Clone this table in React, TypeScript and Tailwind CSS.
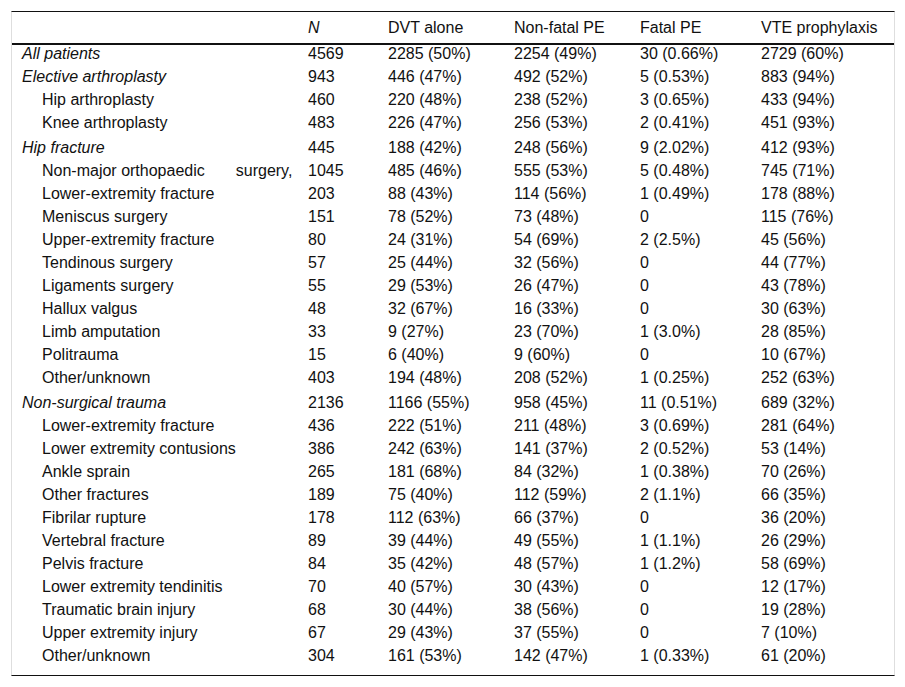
import React from "react";

type Row = {
  label: React.ReactNode;
  level: 0 | 1;
  section?: boolean;
  cells: [string, string, string, string, string];
};

const rows: Row[] = [
  { label: "All patients", level: 0, cells: ["4569", "2285 (50%)", "2254 (49%)", "30 (0.66%)", "2729 (60%)"] },
  { label: "Elective arthroplasty", level: 0, cells: ["943", "446 (47%)", "492 (52%)", "5 (0.53%)", "883 (94%)"] },
  { label: "Hip arthroplasty", level: 1, cells: ["460", "220 (48%)", "238 (52%)", "3 (0.65%)", "433 (94%)"] },
  { label: "Knee arthroplasty", level: 1, cells: ["483", "226 (47%)", "256 (53%)", "2 (0.41%)", "451 (93%)"] },
  { label: "Hip fracture", level: 0, section: true, cells: ["445", "188 (42%)", "248 (56%)", "9 (2.02%)", "412 (93%)"] },
  {
    label: (
      <>
        Non-major orthopaedic<span className="ml-[31px]">surgery,</span>
      </>
    ),
    level: 1,
    cells: ["1045", "485 (46%)", "555 (53%)", "5 (0.48%)", "745 (71%)"],
  },
  { label: "Lower-extremity fracture", level: 1, cells: ["203", "88 (43%)", "114 (56%)", "1 (0.49%)", "178 (88%)"] },
  { label: "Meniscus surgery", level: 1, cells: ["151", "78 (52%)", "73 (48%)", "0", "115 (76%)"] },
  { label: "Upper-extremity fracture", level: 1, cells: ["80", "24 (31%)", "54 (69%)", "2 (2.5%)", "45 (56%)"] },
  { label: "Tendinous surgery", level: 1, cells: ["57", "25 (44%)", "32 (56%)", "0", "44 (77%)"] },
  { label: "Ligaments surgery", level: 1, cells: ["55", "29 (53%)", "26 (47%)", "0", "43 (78%)"] },
  { label: "Hallux valgus", level: 1, cells: ["48", "32 (67%)", "16 (33%)", "0", "30 (63%)"] },
  { label: "Limb amputation", level: 1, cells: ["33", "9 (27%)", "23 (70%)", "1 (3.0%)", "28 (85%)"] },
  { label: "Politrauma", level: 1, cells: ["15", "6 (40%)", "9 (60%)", "0", "10 (67%)"] },
  { label: "Other/unknown", level: 1, cells: ["403", "194 (48%)", "208 (52%)", "1 (0.25%)", "252 (63%)"] },
  { label: "Non-surgical trauma", level: 0, section: true, cells: ["2136", "1166 (55%)", "958 (45%)", "11 (0.51%)", "689 (32%)"] },
  { label: "Lower-extremity fracture", level: 1, cells: ["436", "222 (51%)", "211 (48%)", "3 (0.69%)", "281 (64%)"] },
  { label: "Lower extremity contusions", level: 1, cells: ["386", "242 (63%)", "141 (37%)", "2 (0.52%)", "53 (14%)"] },
  { label: "Ankle sprain", level: 1, cells: ["265", "181 (68%)", "84 (32%)", "1 (0.38%)", "70 (26%)"] },
  { label: "Other fractures", level: 1, cells: ["189", "75 (40%)", "112 (59%)", "2 (1.1%)", "66 (35%)"] },
  { label: "Fibrilar rupture", level: 1, cells: ["178", "112 (63%)", "66 (37%)", "0", "36 (20%)"] },
  { label: "Vertebral fracture", level: 1, cells: ["89", "39 (44%)", "49 (55%)", "1 (1.1%)", "26 (29%)"] },
  { label: "Pelvis fracture", level: 1, cells: ["84", "35 (42%)", "48 (57%)", "1 (1.2%)", "58 (69%)"] },
  { label: "Lower extremity tendinitis", level: 1, cells: ["70", "40 (57%)", "30 (43%)", "0", "12 (17%)"] },
  { label: "Traumatic brain injury", level: 1, cells: ["68", "30 (44%)", "38 (56%)", "0", "19 (28%)"] },
  { label: "Upper extremity injury", level: 1, cells: ["67", "29 (43%)", "37 (55%)", "0", "7 (10%)"] },
  { label: "Other/unknown", level: 1, cells: ["304", "161 (53%)", "142 (47%)", "1 (0.33%)", "61 (20%)"] },
];

export default function App() {
  return (
    <div className="min-h-[687px] bg-white pt-[11px] font-['Liberation_Sans',Arial,sans-serif] text-[16px] text-[#111]">
      <div className="ml-[11px] w-[884px] border-x border-t border-b border-x-[#dedede] border-t-[#111] border-b-[#111] pb-[5px]">
        <table className="w-[882px] table-fixed border-collapse">
          <colgroup>
            <col className="w-[286px]" />
            <col className="w-[80px]" />
            <col className="w-[126px]" />
            <col className="w-[126px]" />
            <col className="w-[121px]" />
            <col className="w-[143px]" />
          </colgroup>
          <thead>
            <tr className="border-b-2 border-[#111]">
              <th className="pl-[10px] pt-[7px] pb-[6px] leading-[18px]" />
              <th className="pl-[10px] pt-[7px] pb-[6px] text-left font-normal italic leading-[18px]">N</th>
              <th className="pl-[10px] pt-[7px] pb-[6px] text-left font-normal leading-[18px]">DVT alone</th>
              <th className="pl-[10px] pt-[7px] pb-[6px] text-left font-normal leading-[18px]">Non-fatal PE</th>
              <th className="pl-[10px] pt-[7px] pb-[6px] text-left font-normal leading-[18px]">Fatal PE</th>
              <th className="pl-[10px] pt-[7px] pb-[6px] text-left font-normal leading-[18px]">VTE prophylaxis</th>
            </tr>
          </thead>
          <tbody>
            {rows.map((r, i) => (
              <tr key={i}>
                <td
                  className={`${r.level === 1 ? "pl-[30px]" : "pl-[10px] italic"} ${
                    r.section ? "pt-[2px]" : "pt-0"
                  } pb-[5px] align-top leading-[18px] whitespace-nowrap`}
                >
                  {r.label}
                </td>
                {r.cells.map((c, j) => (
                  <td
                    key={j}
                    className={`pl-[10px] ${r.section ? "pt-[2px]" : "pt-0"} pb-[5px] align-top leading-[18px] whitespace-nowrap`}
                  >
                    {c}
                  </td>
                ))}
              </tr>
            ))}
          </tbody>
        </table>
      </div>
    </div>
  );
}
